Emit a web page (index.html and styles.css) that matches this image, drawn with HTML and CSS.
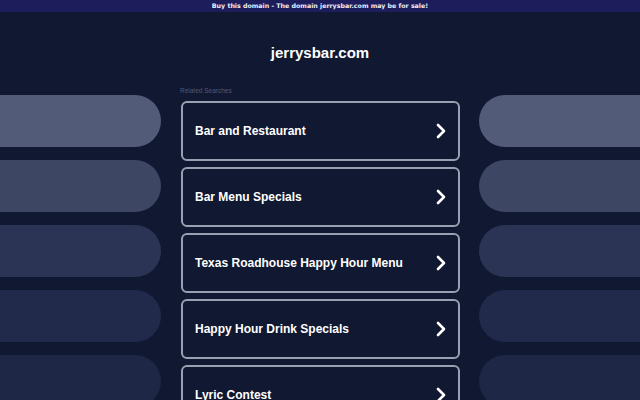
FILE: index.html
```html
<!DOCTYPE html>
<html>
<head>
<meta charset="utf-8">
<link rel="stylesheet" href="styles.css">
</head>
<body>
<div class="topbar">Buy this domain - The domain jerrysbar.com may be for sale!</div>
<h1 class="title">jerrysbar.com</h1>
<div class="main">
  <div class="side side-left">
    <div class="pill p1"></div>
    <div class="pill p2"></div>
    <div class="pill p3"></div>
    <div class="pill p4"></div>
    <div class="pill p5"></div>
  </div>
  <div class="center">
    <div class="label">Related Searches</div>
    <div class="links">
      <a class="link" href="#"><span>Bar and Restaurant</span><svg class="chev" viewBox="0 0 12 16" width="12" height="16"><path d="M3 2 L9 8 L3 14" fill="none" stroke="#fff" stroke-width="2.6" stroke-linecap="round" stroke-linejoin="round"/></svg></a>
      <a class="link" href="#"><span>Bar Menu Specials</span><svg class="chev" viewBox="0 0 12 16" width="12" height="16"><path d="M3 2 L9 8 L3 14" fill="none" stroke="#fff" stroke-width="2.6" stroke-linecap="round" stroke-linejoin="round"/></svg></a>
      <a class="link" href="#"><span>Texas Roadhouse Happy Hour Menu</span><svg class="chev" viewBox="0 0 12 16" width="12" height="16"><path d="M3 2 L9 8 L3 14" fill="none" stroke="#fff" stroke-width="2.6" stroke-linecap="round" stroke-linejoin="round"/></svg></a>
      <a class="link" href="#"><span>Happy Hour Drink Specials</span><svg class="chev" viewBox="0 0 12 16" width="12" height="16"><path d="M3 2 L9 8 L3 14" fill="none" stroke="#fff" stroke-width="2.6" stroke-linecap="round" stroke-linejoin="round"/></svg></a>
      <a class="link" href="#"><span>Lyric Contest</span><svg class="chev" viewBox="0 0 12 16" width="12" height="16"><path d="M3 2 L9 8 L3 14" fill="none" stroke="#fff" stroke-width="2.6" stroke-linecap="round" stroke-linejoin="round"/></svg></a>
    </div>
  </div>
  <div class="side side-right">
    <div class="pill p1"></div>
    <div class="pill p2"></div>
    <div class="pill p3"></div>
    <div class="pill p4"></div>
    <div class="pill p5"></div>
  </div>
</div>
</body>
</html>
```
FILE: styles.css
```css
html, body {
  margin: 0;
  padding: 0;
  height: 100%;
  overflow: hidden;
}
body {
  background: #111831;
  font-family: "Liberation Sans", Arial, sans-serif;
  color: #fff;
}
.topbar {
  height: 12px;
  line-height: 12px;
  background: #1c1d5a;
  color: #eeeef8;
  font-family: "DejaVu Sans", sans-serif;
  font-size: 6.3px;
  font-weight: bold;
  text-align: center;
}
.title {
  margin: 0;
  padding-top: 31px;
  height: 20px;
  line-height: 20px;
  font-size: 15px;
  font-weight: bold;
  text-align: center;
  color: #fff;
}
.main {
  display: flex;
  gap: 19px;
  margin-top: 23px;
}
.side {
  width: 161px;
  flex: none;
  display: flex;
  flex-direction: column;
  gap: 13px;
  padding-top: 9px;
}
.pill {
  height: 52px;
}
.side-left .pill {
  border-radius: 0 26px 26px 0;
}
.side-right .pill {
  border-radius: 26px 0 0 26px;
}
.p1 { background: #525b78; }
.p2 { background: #3d4663; }
.p3 { background: #2c3455; }
.p4 { background: #222a4b; }
.p5 { background: #1f2747; }
.center {
  width: 280px;
  flex: none;
}
.label {
  font-size: 6.5px;
  color: #515977;
  height: 9px;
  line-height: 9px;
  margin-bottom: 6px;
}
.links {
  display: flex;
  flex-direction: column;
  gap: 6px;
  padding-left: 1px;
}
.link {
  box-sizing: border-box;
  height: 60px;
  width: 279px;
  border: 2px solid #9aa0b2;
  border-radius: 6px;
  display: flex;
  align-items: center;
  justify-content: space-between;
  padding: 0 11px 0 12px;
  text-decoration: none;
  color: #fff;
  font-size: 12px;
  font-weight: bold;
  background: #111831;
}
.chev {
  display: block;
}
```
